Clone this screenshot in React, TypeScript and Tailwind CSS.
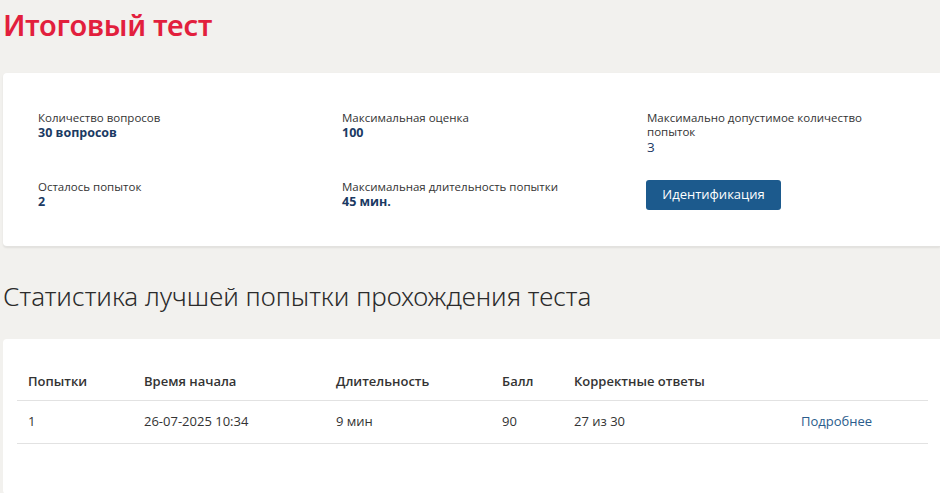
import React from 'react';

const info = [
  { label: 'Количество вопросов', value: '30 вопросов', bold: true },
  { label: 'Максимальная оценка', value: '100', bold: true },
  { label: 'Максимально допустимое количество попыток', value: '3', bold: false },
  { label: 'Осталось попыток', value: '2', bold: true },
  { label: 'Максимальная длительность попытки', value: '45 мин.', bold: true },
];

const InfoItem = ({ label, value, bold }: { label: string; value: string; bold: boolean }) => (
  <div className="max-w-[226px]">
    <div className="text-[11.5px] leading-[14px] text-[#333]">{label}</div>
    <div className={bold ? 'text-[12.5px] leading-[16px] font-bold text-[#1b3a63]' : 'text-[13.5px] leading-[17px] text-[#1b3a63]'}>
      {value}
    </div>
  </div>
);

export default function App() {
  return (
    <div className="min-h-screen bg-[#f2f1ee] pl-[3px] pb-10 overflow-hidden" style={{ fontFamily: '"Open Sans", "Noto Sans", sans-serif' }}>
      {/* Title */}
      <h1 className="pt-[6px] h-[73px] text-[29px] leading-[38px] font-semibold text-[#e21f3d] tracking-[-0.2px]" style={{ fontFamily: '"Noto Sans", sans-serif' }}>
        Итоговый тест
      </h1>

      {/* Test info */}
      <div className="bg-white rounded-l-[4px] shadow-[0_1px_2px_rgba(0,0,0,0.08)] border-b border-[#e3e2df] pl-[35px] pt-[38px] pb-[36px]">
        <div className="grid grid-cols-[304px_305px_1fr] gap-y-[24px]">
          <InfoItem {...info[0]} />
          <InfoItem {...info[1]} />
          <InfoItem {...info[2]} />
          <InfoItem {...info[3]} />
          <InfoItem {...info[4]} />
          <div>
            <button className="h-[30px] w-[135px] -ml-[1px] rounded-[3px] bg-[#1c5a8d] text-white text-[13px]">
              Идентификация
            </button>
          </div>
        </div>
      </div>

      {/* Statistics */}
      <h2 className="mt-[32px] mb-[26px] text-[26px] leading-[34px] font-light text-[#2b2b2b]" style={{ fontFamily: '"Noto Sans", sans-serif' }}>
        Статистика лучшей попытки прохождения теста
      </h2>

      <div className="bg-white rounded-l-[4px] pl-[14px] pr-[12px] pt-[25px] pb-[50px]">
        <table className="w-full text-[13px] text-[#333] border-collapse">
          <thead>
            <tr className="border-b border-[#e2e2e2] h-[36px] text-left">
              <th className="pl-[11px] w-[127px] font-semibold">Попытки</th>
              <th className="w-[192px] font-semibold">Время начала</th>
              <th className="w-[166px] font-semibold">Длительность</th>
              <th className="w-[72px] font-semibold">Балл</th>
              <th className="w-[227px] font-semibold">Корректные ответы</th>
              <th></th>
            </tr>
          </thead>
          <tbody>
            <tr className="border-b border-[#e2e2e2] h-[43px]">
              <td className="pl-[11px]">1</td>
              <td>26-07-2025 10:34</td>
              <td>9 мин</td>
              <td>90</td>
              <td>27 из 30</td>
              <td>
                <a href="#" className="text-[#2a5c8c]">Подробнее</a>
              </td>
            </tr>
          </tbody>
        </table>
      </div>
    </div>
  );
}
